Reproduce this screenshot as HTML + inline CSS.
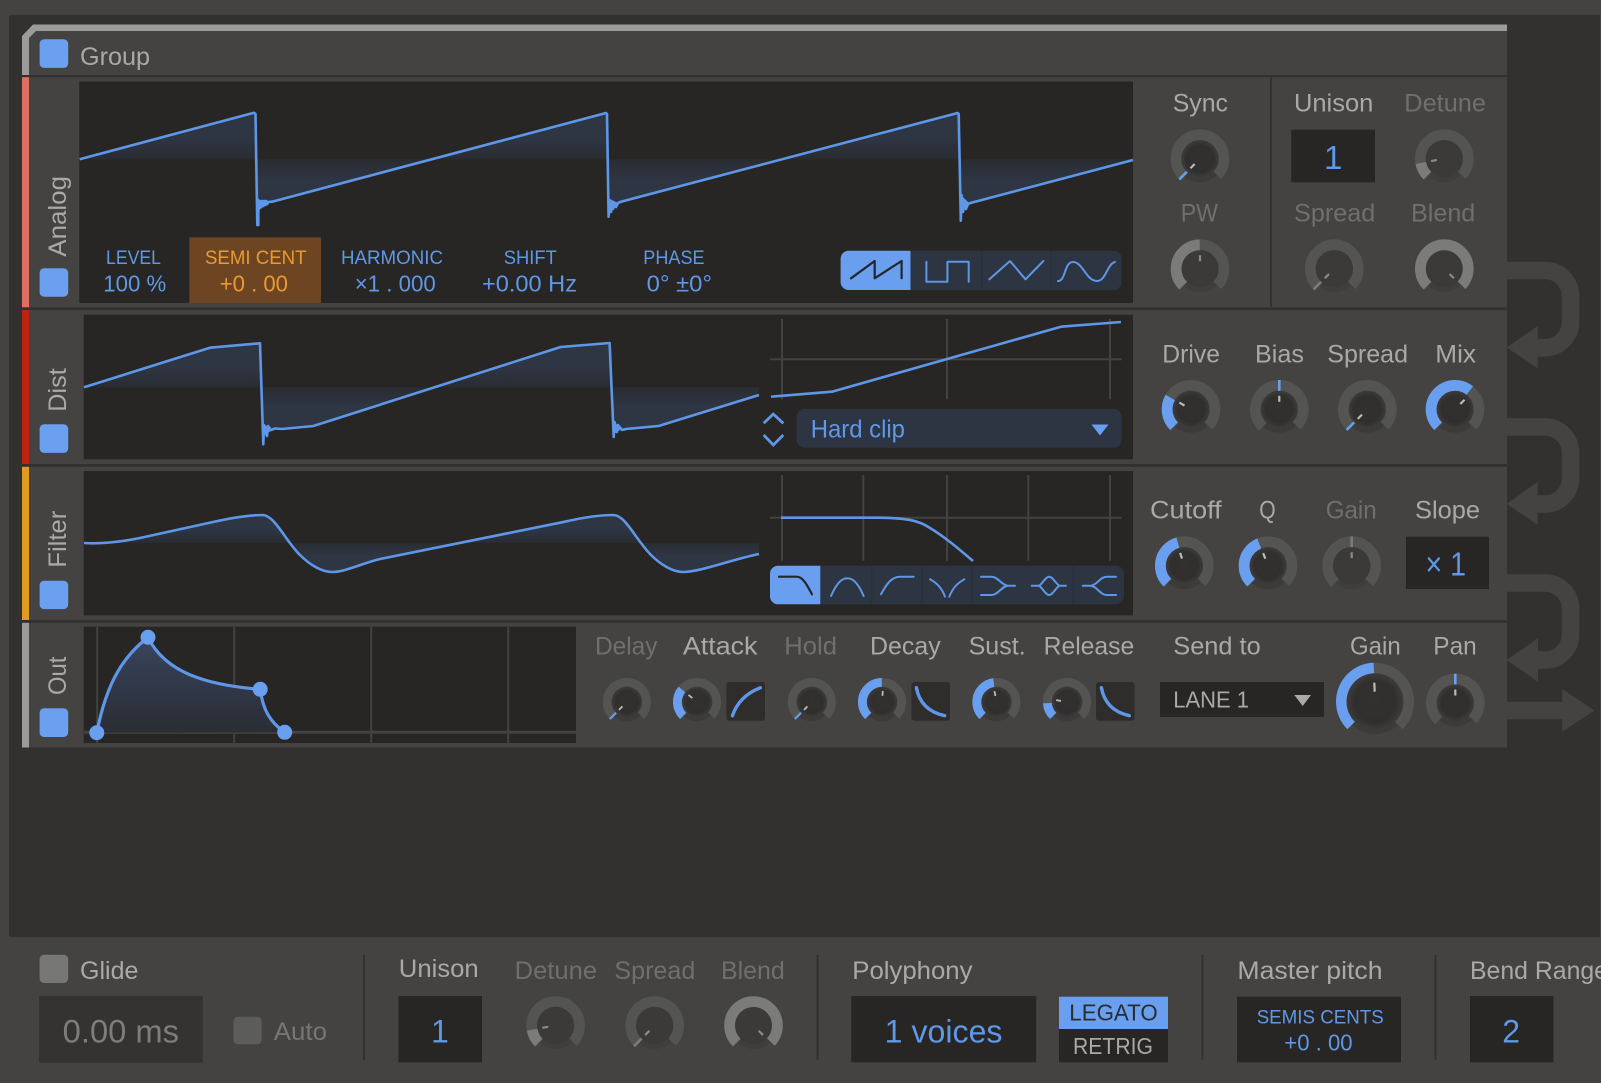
<!DOCTYPE html>
<html><head><meta charset="utf-8"><title>Group</title>
<style>
html,body{margin:0;padding:0;background:#444341;width:1601px;height:1083px;overflow:hidden}
svg{display:block;position:absolute;left:0;top:0}
text{font-family:"Liberation Sans",sans-serif;font-size:25px}
.h{fill:#a9a9a7}.d{fill:#6f6f6e}.b{fill:#6098e8}.o{fill:#e99a30}
.s19{font-size:19.5px}.s23{font-size:23.5px}.s32{font-size:32px}
.ln{fill:none;stroke:#5f97e8;stroke-width:2.6;stroke-linejoin:round}
.ic{fill:none;stroke:#5f97e8;stroke-width:2;stroke-linejoin:round;stroke-linecap:round}
.icd{fill:none;stroke:#23262c;stroke-width:2.2;stroke-linejoin:round;stroke-linecap:round}
.gr{stroke:#434241;stroke-width:2;fill:none}
.tr{fill:none;stroke:#545453;stroke-width:10.8}
.va{fill:none;stroke:#6a9ff0;stroke-width:10.8}
.vd{fill:none;stroke:#7b7b7a;stroke-width:10.8}
.sl{stroke:#6a9ff0;stroke-width:2.6;fill:none}
.sd{stroke:#7b7b7a;stroke-width:2.6;fill:none}
.tk{stroke:#bbbbb9;stroke-width:2.2;fill:none}
.td{stroke:#8a8a88;stroke-width:2.2;fill:none}
.cb{fill:#6b9ff0}
.cv{fill:none;stroke:#5f97e8;stroke-width:3.4;stroke-linecap:round}
.con{fill:none;stroke:#444341;stroke-width:17.5}
</style></head><body>
<svg width="1601" height="1083" viewBox="0 0 1601 1083" xmlns="http://www.w3.org/2000/svg">
<defs>
<linearGradient id="s"><stop offset="0" stop-color="#2e3543"/><stop offset=".28" stop-color="#2e3543"/><stop offset=".5" stop-color="#2e3543" stop-opacity=".4"/><stop offset=".72" stop-color="#2e3543"/><stop offset="1" stop-color="#2e3543"/></linearGradient>
<linearGradient id="f1" href="#s" gradientUnits="userSpaceOnUse" x1="0" y1="113" x2="0" y2="206"/>
<linearGradient id="f2" href="#s" gradientUnits="userSpaceOnUse" x1="0" y1="343" x2="0" y2="431"/>
<linearGradient id="f3" href="#s" gradientUnits="userSpaceOnUse" x1="0" y1="514" x2="0" y2="572"/>
<linearGradient id="f4" x1="0" y1="0" x2="0" y2="1"><stop offset="0" stop-color="#3b465c"/><stop offset=".5" stop-color="#303849"/><stop offset="1" stop-color="#2b2d33"/></linearGradient>
<radialGradient id="kn"><stop offset="0" stop-color="#323130"/><stop offset=".72" stop-color="#302f2e"/><stop offset="1" stop-color="#3d3c3b"/></radialGradient>
<g id="k"><circle r="23" cy=".5" fill="#3c3b3a"/><circle class="tr" r="23.9" pathLength="360" stroke-dasharray="270 90" transform="rotate(135)"/><circle r="18.7" fill="url(#kn)"/></g>
<g id="kd"><circle r="23" cy=".5" fill="#3f3e3d"/><circle class="tr" r="23.9" pathLength="360" stroke-dasharray="270 90" transform="rotate(135)"/><circle r="18.7" fill="#3b3a39"/></g>
</defs>

<!-- backgrounds -->
<rect width="1601" height="1083" fill="#444341"/>
<rect x="9" y="15" width="1591" height="922" fill="#323130"/>

<!-- connectors -->
<g>
<path class="con" d="M1507 270.5H1545A25.5 25.5 0 0 1 1570.5 296V322A25.7 25.7 0 0 1 1545 347.7H1535"/>
<path fill="#444341" d="M1506.7 347.5L1537.7 326V368.3Z"/>
<path class="con" d="M1507 427H1545A25.5 25.5 0 0 1 1570.5 452.5V478.5A25.5 25.5 0 0 1 1545 504H1535"/>
<path fill="#444341" d="M1506.7 504L1537.7 481.7V525Z"/>
<path class="con" d="M1507 583H1545A25.5 25.5 0 0 1 1570.5 608.5V634.5A25.5 25.5 0 0 1 1545 660H1535"/>
<path fill="#444341" d="M1506.7 660L1538 638.3V681.7Z"/>
<path fill="#444341" d="M1507 701.7H1562.3V689L1594.3 710.5L1562.3 731.7V719.3H1507Z"/>
</g>

<!-- main panel -->
<path fill="#444341" d="M29 38L36 31H1507V747.5H29Z"/>
<path fill="#9b9b9a" d="M22 76V36L33 24.5H1507V31H36L29 38V76Z"/>
<rect x="22" y="75" width="1485" height="2.2" fill="#323130"/>
<rect x="22" y="307.3" width="1485" height="2.8" fill="#323130"/>
<rect x="22" y="464" width="1485" height="2.8" fill="#323130"/>
<rect x="22" y="620" width="1485" height="2.8" fill="#323130"/>
<rect x="22" y="77.2" width="7" height="230.1" fill="#df705f"/>
<rect x="22" y="310" width="7" height="154" fill="#bd2310"/>
<rect x="22" y="466.8" width="7" height="153.2" fill="#e09b22"/>
<rect x="22" y="622.8" width="7" height="124.7" fill="#9b9b9a"/>
<rect x="1270" y="77" width="2" height="230" fill="#323130"/>

<rect class="cb" x="39.6" y="39.3" width="28.6" height="28.6" rx="4.5"/>
<text class="h" x="80" y="65" textLength="70" lengthAdjust="spacingAndGlyphs">Group</text>

<!-- left rotated labels -->
<text class="h" transform="translate(66,256.7) rotate(-90)" textLength="80.7" lengthAdjust="spacingAndGlyphs">Analog</text>
<text class="h" transform="translate(66,411.7) rotate(-90)" textLength="43.4" lengthAdjust="spacingAndGlyphs">Dist</text>
<text class="h" transform="translate(66,567.7) rotate(-90)" textLength="57" lengthAdjust="spacingAndGlyphs">Filter</text>
<text class="h" transform="translate(66,695) rotate(-90)" textLength="38.3" lengthAdjust="spacingAndGlyphs">Out</text>
<rect class="cb" x="39.6" y="268.3" width="28.6" height="28.4" rx="4.5"/>
<rect class="cb" x="39.6" y="424.3" width="28.6" height="28.6" rx="4.5"/>
<rect class="cb" x="39.6" y="580.7" width="28.6" height="28.4" rx="4.5"/>
<rect class="cb" x="39.6" y="708.3" width="28.6" height="28.7" rx="4.5"/>

<!-- analog display -->
<rect x="79.3" y="81.5" width="1053.7" height="221.5" fill="#272625"/>
<path fill="url(#f1)" d="M79.6 159.3L254 112.7L255 159.3ZM257 159.3L258 205L272 201.7L431.6 159.3ZM431.6 159.3L606 113L608 159.3ZM609 159.3L610 205L621 201.7L780.6 159.3ZM780.6 159.3L957.7 113L959 159.3ZM960 159.3L961 205L970.4 203L1133 160V159.3Z"/>
<path class="ln" d="M79.6 159.3L254 112.7L255.5 114L257.3 225L258.3 225V200l1 8l1 -7l1 6l1 -6l1 5l1 -5l1 4l1 -4l1 3l1 -2L272 201.7L606 113L607 114L608.6 216.7L609.5 202L611 212L612 202L613 209L614.5 203L616 207L618 203L621 201.7L957.7 113L958.7 114L960.8 220.7L961.6 195L963 212L964.5 203L966 209L968 204L970.4 203L1133 160"/>
<path fill="#5f97e8" d="M608 198L618 203L610 214ZM960 194L969 203L962 209ZM257 198L264 205L258 212Z"/>
<rect x="189.4" y="237.3" width="131.6" height="65.7" fill="#6e4522"/>
<g>
<text class="b s19" x="106" y="264" textLength="55" lengthAdjust="spacingAndGlyphs">LEVEL</text>
<text class="b s23" x="103.3" y="291.7" textLength="63" lengthAdjust="spacingAndGlyphs">100 %</text>
<text class="o s19" x="205" y="264" textLength="101.5" lengthAdjust="spacingAndGlyphs">SEMI CENT</text>
<text class="o s23" x="219.7" y="291.7" textLength="68.3" lengthAdjust="spacingAndGlyphs">+0 . 00</text>
<text class="b s19" x="341" y="264" textLength="102" lengthAdjust="spacingAndGlyphs">HARMONIC</text>
<text class="b s23" x="354.7" y="291.7" textLength="81" lengthAdjust="spacingAndGlyphs">×1 . 000</text>
<text class="b s19" x="503.8" y="264" textLength="53" lengthAdjust="spacingAndGlyphs">SHIFT</text>
<text class="b s23" x="482" y="291.7" textLength="95" lengthAdjust="spacingAndGlyphs">+0.00 Hz</text>
<text class="b s19" x="643.3" y="264" textLength="61.3" lengthAdjust="spacingAndGlyphs">PHASE</text>
<text class="b s23" x="646.7" y="291.7" textLength="65.3" lengthAdjust="spacingAndGlyphs">0° ±0°</text>
</g>
<!-- wave selector -->
<rect x="840.6" y="250.7" width="281" height="39.3" rx="8" fill="#2d3442"/>
<path fill="#6a9ff0" d="M848.6 250.7H910.5V290H848.6A8 8 0 0 1 840.6 282V258.7A8 8 0 0 1 848.6 250.7Z"/>
<path stroke="#2a2f3a" stroke-width="1" d="M981.8 250.7V290M1051.4 250.7V290"/>
<path class="icd" d="M851 278.3L874.7 261V278.3L901.6 261V278.3"/>
<path class="ic" d="M926.4 261.7V281.7H947.4V261.7H968.7V281.7"/>
<path class="ic" d="M989.4 279.3L1010 261L1025.5 279.3L1043.4 261"/>
<path class="ic" d="M1058 281C1066 281 1064 262 1073 262C1083 262 1086 281 1097 281C1106 281 1107 264 1115 262"/>

<!-- analog knobs -->
<text class="h" x="1172.7" y="111.7" textLength="55.3" lengthAdjust="spacingAndGlyphs">Sync</text>
<text class="d" x="1180.7" y="221.3" textLength="37.3" lengthAdjust="spacingAndGlyphs">PW</text>
<text class="h" x="1294" y="111.7" textLength="79.3" lengthAdjust="spacingAndGlyphs">Unison</text>
<text class="d" x="1404.3" y="111.7" textLength="81.7" lengthAdjust="spacingAndGlyphs">Detune</text>
<text class="d" x="1294" y="221.3" textLength="81.3" lengthAdjust="spacingAndGlyphs">Spread</text>
<text class="d" x="1411" y="221.3" textLength="64.3" lengthAdjust="spacingAndGlyphs">Blend</text>
<rect x="1291.3" y="129.7" width="83.7" height="52.6" fill="#272625"/>
<text class="b" style="font-size:33px" x="1324" y="169">1</text>

<g transform="translate(1200,158.7)"><use href="#k"/><path class="sl" transform="rotate(-135)" d="M0 -18.5V-29.3"/><path class="tk" transform="rotate(-135)" d="M0 -7.5V-13.5"/></g>
<g transform="translate(1200,268.7)"><use href="#kd"/><circle class="vd" r="23.9" pathLength="360" stroke-dasharray="135 360" transform="rotate(135)"/><path class="td" d="M0 -7.5V-13.5"/></g>
<g transform="translate(1444.3,158.7)"><use href="#kd"/><circle class="vd" r="23.9" pathLength="360" stroke-dasharray="35 360" transform="rotate(135)"/><path class="td" transform="rotate(-100)" d="M0 -7.5V-13.5"/></g>
<g transform="translate(1334.3,268.7)"><use href="#kd"/><path class="sd" transform="rotate(-135)" d="M0 -18.5V-29.3"/><path class="td" transform="rotate(-135)" d="M0 -7.5V-13.5"/></g>
<g transform="translate(1444.3,268.7)"><use href="#kd"/><circle class="vd" r="23.9" pathLength="360" stroke-dasharray="270 360" transform="rotate(135)"/><path class="td" transform="rotate(135)" d="M0 -7.5V-13.5"/></g>

<!-- dist display -->
<rect x="83.7" y="314.7" width="1049.3" height="144.6" fill="#272625"/>
<path fill="url(#f2)" d="M84 387.3L210 347.7L260 343.3L262 387.3ZM263 387.3L264 430L313.4 426L434.4 387.3ZM434.4 387.3L560.6 347L609.6 343L611.5 387.3ZM613 387.3L614 432L658.6 426L759 395V387.3Z"/>
<path class="ln" d="M84 387.3L210 347.7L260 343.3L263.3 444.3L264 425L267 436L268 426L271 430L275 428.5L282 429L313.4 426L560.6 347L609.6 343L613.7 437L614.5 422L617 432L618 425L622 430L626 429L658.6 426L759 395"/>
<path fill="#5f97e8" d="M264 424L272 430L264 436ZM614 422L621 429L614 434Z"/>
<path class="gr" d="M782 319V399.3M947 319V399.3M1110 319V399.3M770 359.3H1121.7"/>
<path class="ln" d="M771 396.7L832 391.7L1061 326.7L1121 322"/>
<path fill="none" stroke="#5f97e8" stroke-width="2.8" d="M763.7 423.3L773.3 414L783.3 423.3M763.7 435L773.3 445L783.3 435"/>
<rect x="796.7" y="409" width="325" height="38.7" rx="8" fill="#2d3442"/>
<text class="b" x="810.7" y="437.7" textLength="94.3" lengthAdjust="spacingAndGlyphs">Hard clip</text>
<path fill="#6a9ff0" d="M1091.5 424.5H1108.5L1100 435.5Z"/>

<text class="h" x="1162.3" y="362.3" textLength="57.7" lengthAdjust="spacingAndGlyphs">Drive</text>
<text class="h" x="1255" y="362.3" textLength="49" lengthAdjust="spacingAndGlyphs">Bias</text>
<text class="h" x="1327.3" y="362.3" textLength="80.7" lengthAdjust="spacingAndGlyphs">Spread</text>
<text class="h" x="1435.3" y="362.3" textLength="40.7" lengthAdjust="spacingAndGlyphs">Mix</text>
<g transform="translate(1191,409.3)"><use href="#k"/><circle class="va" r="23.9" pathLength="360" stroke-dasharray="75 360" transform="rotate(135)"/><path class="tk" transform="rotate(-60)" d="M0 -7.5V-13.5"/></g>
<g transform="translate(1279.3,409.3)"><use href="#k"/><path class="sl" d="M0 -18.5V-29.3"/><path class="tk" d="M0 -7.5V-13.5"/></g>
<g transform="translate(1367.3,409.3)"><use href="#k"/><path class="sl" transform="rotate(-135)" d="M0 -18.5V-29.3"/><path class="tk" transform="rotate(-135)" d="M0 -7.5V-13.5"/></g>
<g transform="translate(1455,409.3)"><use href="#k"/><circle class="va" r="23.9" pathLength="360" stroke-dasharray="174 360" transform="rotate(135)"/><path class="tk" transform="rotate(45)" d="M0 -7.5V-13.5"/></g>

<!-- filter display -->
<rect x="83.7" y="471" width="1049.3" height="144.3" fill="#272625"/>
<path fill="url(#f3)" d="M84 543C100 544 120 542 140 538L213 522C235 517 250 515 263 515C275 516 285 540 300 555C310 565 322 572 332 572C345 572 360 564 380 559L565 521.7C585 517 600 515 614 515C626 516 636 540 651 555C661 565 673 572 683 572C700 572 730 560 759 554V543Z"/>
<path class="ln" d="M84 543C100 544 120 542 140 538L213 522C235 517 250 515 263 515C275 516 285 540 300 555C310 565 322 572 332 572C345 572 360 564 380 559L565 521.7C585 517 600 515 614 515C626 516 636 540 651 555C661 565 673 572 683 572C700 572 730 560 759 554"/>
<path class="gr" d="M782 475V560.7M863.3 475V560.7M947 475V560.7M1028.3 475V560.7M1110 475V560.7M770 517.7H1121.7"/>
<path class="ln" d="M781 517.7H880C905 518 918 520 930 528C945 537 960 550 973 561"/>
<rect x="770" y="565.7" width="354" height="38.6" rx="8" fill="#2d3442"/>
<path fill="#6a9ff0" d="M778 565.7H820.3V604.3H778A8 8 0 0 1 770 596.3V573.7A8 8 0 0 1 778 565.7Z"/>
<path stroke="#2a2f3a" stroke-width="1" d="M871.7 565.7V604.3M921.7 565.7V604.3M972.3 565.7V604.3M1073.3 565.7V604.3"/>
<path class="icd" d="M779 576.7H796.7C803 576.7 807 585 812 594.3"/>
<path class="ic" d="M831 596C836.7 583 841.7 578.3 847.3 578.3C853 578.3 858 583 863.7 596"/>
<path class="ic" d="M881 594.3C887 583 892 576.7 900 576.7H913.7"/>
<path class="ic" d="M930 579.3C937 583 942 588 945 596.7M949.3 596.7C953 587 958 583 964.3 579.3"/>
<path class="ic" d="M981 576.7H991.7C998 576.7 1002 585.7 1008.3 585.7H1015M981 595H991.7C998 595 1002 585.7 1008.3 585.7"/>
<path class="ic" d="M1031.7 585.7H1038.3C1041.7 585.7 1045 576.7 1049 576.7C1053.3 576.7 1056.7 585.7 1060 585.7H1066M1038.3 585.7C1041.7 585.7 1045 595 1049 595C1053.3 595 1056.7 585.7 1060 585.7"/>
<path class="ic" d="M1082.7 585.7H1090C1096.7 585.7 1100 576.7 1106.7 576.7H1116M1090 585.7C1096.7 585.7 1100 595 1106.7 595H1116"/>

<text class="h" x="1150" y="518.7" textLength="71.7" lengthAdjust="spacingAndGlyphs">Cutoff</text>
<text class="h" x="1259.3" y="518.7" textLength="16.4" lengthAdjust="spacingAndGlyphs">Q</text>
<text class="d" x="1325.7" y="518.7" textLength="51" lengthAdjust="spacingAndGlyphs">Gain</text>
<text class="h" x="1415" y="518.7" textLength="65" lengthAdjust="spacingAndGlyphs">Slope</text>
<g transform="translate(1184.3,565.7)"><use href="#k"/><circle class="va" r="23.9" pathLength="360" stroke-dasharray="120 360" transform="rotate(135)"/><path class="tk" transform="rotate(-18)" d="M0 -7.5V-13.5"/></g>
<g transform="translate(1268,565.7)"><use href="#k"/><circle class="va" r="23.9" pathLength="360" stroke-dasharray="114 360" transform="rotate(135)"/><path class="tk" transform="rotate(-21)" d="M0 -7.5V-13.5"/></g>
<g transform="translate(1351.7,565.7)"><use href="#kd"/><path class="sd" d="M0 -18.5V-29.3"/><path class="td" d="M0 -7.5V-13.5"/></g>
<rect x="1406" y="536.7" width="83" height="52.3" fill="#272625"/>
<text class="b" style="font-size:33px" x="1425.5" y="575.5" textLength="40.5" lengthAdjust="spacingAndGlyphs">× 1</text>

<!-- out display -->
<rect x="83.7" y="626.7" width="492.3" height="116.3" fill="#272625"/>
<path class="gr" d="M97.2 627V743M234.2 627V743M371.2 627V743M508.2 627V743"/>
<path stroke="#434241" stroke-width="3" d="M84 732.3H576"/>
<path fill="url(#f4)" d="M96.8 732.7C107 680 125 655 148 637.3C165 672 205 685 260.2 689.3C263 710 270 722 284.7 732.3Z"/>
<path fill="none" stroke="#5f97e8" stroke-width="3.2" d="M96.8 732.7C107 680 125 655 148 637.3C165 672 205 685 260.2 689.3C263 710 270 722 284.7 732.3"/>
<g fill="#6a9ff0"><circle cx="96.8" cy="732.7" r="7.5"/><circle cx="148" cy="637.3" r="7.5"/><circle cx="260.2" cy="689.3" r="7.5"/><circle cx="284.7" cy="732.3" r="7.5"/></g>

<text class="d" x="595" y="654.3" textLength="62.5" lengthAdjust="spacingAndGlyphs">Delay</text>
<text class="h" x="682.9" y="654.3" textLength="74.6" lengthAdjust="spacingAndGlyphs">Attack</text>
<text class="d" x="784.3" y="654.3" textLength="52.7" lengthAdjust="spacingAndGlyphs">Hold</text>
<text class="h" x="870" y="654.3" textLength="70.7" lengthAdjust="spacingAndGlyphs">Decay</text>
<text class="h" x="968.6" y="654.3" textLength="57.1" lengthAdjust="spacingAndGlyphs">Sust.</text>
<text class="h" x="1043.6" y="654.3" textLength="90.7" lengthAdjust="spacingAndGlyphs">Release</text>
<text class="h" x="1173.3" y="654.3" textLength="87.4" lengthAdjust="spacingAndGlyphs">Send to</text>
<text class="h" x="1350" y="654.3" textLength="50.7" lengthAdjust="spacingAndGlyphs">Gain</text>
<text class="h" x="1433.3" y="654.3" textLength="43.4" lengthAdjust="spacingAndGlyphs">Pan</text>

<g transform="translate(626.8,702) scale(.82)"><use href="#k"/><path class="sl" transform="rotate(-135)" d="M0 -18.5V-29.3"/><path class="tk" transform="rotate(-135)" d="M0 -7.5V-13.5"/></g>
<g transform="translate(697,702) scale(.82)"><use href="#k"/><circle class="va" r="23.9" pathLength="360" stroke-dasharray="85 360" transform="rotate(135)"/><path class="tk" transform="rotate(-50)" d="M0 -7.5V-13.5"/></g>
<g transform="translate(811.8,702) scale(.82)"><use href="#k"/><path class="sl" transform="rotate(-135)" d="M0 -18.5V-29.3"/><path class="tk" transform="rotate(-135)" d="M0 -7.5V-13.5"/></g>
<g transform="translate(882,702) scale(.82)"><use href="#k"/><circle class="va" r="23.9" pathLength="360" stroke-dasharray="135 360" transform="rotate(135)"/><path class="tk" transform="rotate(4)" d="M0 -7.5V-13.5"/></g>
<g transform="translate(996.4,702) scale(.82)"><use href="#k"/><circle class="va" r="23.9" pathLength="360" stroke-dasharray="128 360" transform="rotate(135)"/><path class="tk" transform="rotate(-10)" d="M0 -7.5V-13.5"/></g>
<g transform="translate(1067,702) scale(.82)"><use href="#k"/><circle class="va" r="23.9" pathLength="360" stroke-dasharray="42 360" transform="rotate(135)"/><path class="tk" transform="rotate(-80)" d="M0 -7.5V-13.5"/></g>

<rect x="726.4" y="682" width="38.6" height="38.7" rx="3" fill="#2e2d2c"/>
<path class="cv" d="M732.5 715.7C737 702 747 693 760.4 687.7"/>
<rect x="911.4" y="682" width="38.6" height="38.7" rx="3" fill="#2e2d2c"/>
<path class="cv" d="M916.4 687.7C919 702 928 712 944.6 715.7"/>
<rect x="1096" y="682" width="38.6" height="38.7" rx="3" fill="#2e2d2c"/>
<path class="cv" d="M1101.4 687.7C1104 702 1113 712 1129.3 715.7"/>

<rect x="1160" y="682" width="164" height="35" fill="#272625"/>
<text class="h s23" x="1173.3" y="707.3" textLength="75.7" lengthAdjust="spacingAndGlyphs">LANE 1</text>
<path fill="#a9a9a7" d="M1294.3 695H1311L1302.7 706Z"/>

<g transform="translate(1375,701.7)">
<circle r="32" cy=".5" fill="#3c3b3a"/>
<circle class="tr" r="33.6" pathLength="360" stroke-dasharray="270 90" transform="rotate(135)"/>
<circle class="va" r="33.6" pathLength="360" stroke-dasharray="133 360" transform="rotate(135)"/>
<circle r="28.5" fill="url(#kn)"/>
<path class="tk" transform="rotate(-2)" d="M0 -10V-19"/>
</g>
<g transform="translate(1455.3,703)"><use href="#k"/><path class="sl" d="M0 -18.5V-29.3"/><path class="tk" d="M0 -7.5V-13.5"/></g>

<!-- bottom bar -->
<rect x="39.6" y="954.7" width="28.6" height="28.3" rx="4.5" fill="#777776"/>
<text class="h" x="80" y="979" textLength="58.4" lengthAdjust="spacingAndGlyphs">Glide</text>
<rect x="39" y="996" width="163.8" height="66.7" fill="#343332"/>
<text class="s32" fill="#7d7d7c" x="62.7" y="1042.7" textLength="116.3" lengthAdjust="spacingAndGlyphs">0.00 ms</text>
<rect x="233.5" y="1016.7" width="28.2" height="27.6" rx="4.5" fill="#5c5c5b"/>
<text class="d" x="273.8" y="1040" textLength="53.2" lengthAdjust="spacingAndGlyphs" style="fill:#767675">Auto</text>
<path stroke="#323130" stroke-width="2" d="M364 955V1060M817.5 955V1060M1202.5 955V1060M1435.4 955V1060"/>
<text class="h" x="398.8" y="977" textLength="79.9" lengthAdjust="spacingAndGlyphs">Unison</text>
<rect x="398.4" y="996" width="83.6" height="66.3" fill="#272625"/>
<text class="b s32" x="431" y="1042.7">1</text>
<text class="d" x="514.6" y="979" textLength="82.5" lengthAdjust="spacingAndGlyphs">Detune</text>
<text class="d" x="614.4" y="979" textLength="80.9" lengthAdjust="spacingAndGlyphs">Spread</text>
<text class="d" x="721" y="979" textLength="63.8" lengthAdjust="spacingAndGlyphs">Blend</text>
<g transform="translate(555.6,1025.5)"><use href="#kd"/><circle class="vd" r="23.9" pathLength="360" stroke-dasharray="35 360" transform="rotate(135)"/><path class="td" transform="rotate(-100)" d="M0 -7.5V-13.5"/></g>
<g transform="translate(654.7,1025.5)"><use href="#kd"/><path class="sd" transform="rotate(-135)" d="M0 -18.5V-29.3"/><path class="td" transform="rotate(-135)" d="M0 -7.5V-13.5"/></g>
<g transform="translate(753.5,1025.5)"><use href="#kd"/><circle class="vd" r="23.9" pathLength="360" stroke-dasharray="270 360" transform="rotate(135)"/><path class="td" transform="rotate(135)" d="M0 -7.5V-13.5"/></g>
<text class="h" x="852.3" y="979" textLength="120.2" lengthAdjust="spacingAndGlyphs">Polyphony</text>
<rect x="851.3" y="996" width="184.9" height="66.3" fill="#272625"/>
<text class="b s32" x="884.7" y="1042.7" textLength="117.8" lengthAdjust="spacingAndGlyphs">1 voices</text>
<rect x="1059" y="996.7" width="109" height="32.3" fill="#6a9ff0"/>
<rect x="1059" y="1029" width="109" height="33.3" fill="#272625"/>
<text class="s23" fill="#282c34" x="1069.3" y="1020.7" textLength="88.4" lengthAdjust="spacingAndGlyphs">LEGATO</text>
<text class="h s23" x="1073" y="1054" textLength="80" lengthAdjust="spacingAndGlyphs">RETRIG</text>
<text class="h" x="1237.4" y="979" textLength="145.2" lengthAdjust="spacingAndGlyphs">Master pitch</text>
<rect x="1237" y="996.7" width="164" height="65.6" fill="#272625"/>
<text class="b s19" x="1256.7" y="1023.3" textLength="127" lengthAdjust="spacingAndGlyphs">SEMIS CENTS</text>
<text class="b s23" x="1284.3" y="1050.7" textLength="68.3" lengthAdjust="spacingAndGlyphs">+0 . 00</text>
<text class="h" x="1470" y="979" textLength="138" lengthAdjust="spacingAndGlyphs">Bend Range</text>
<rect x="1470" y="996" width="83.4" height="66.3" fill="#272625"/>
<text class="b s32" x="1502.3" y="1042.7">2</text>
</svg>
</body></html>
